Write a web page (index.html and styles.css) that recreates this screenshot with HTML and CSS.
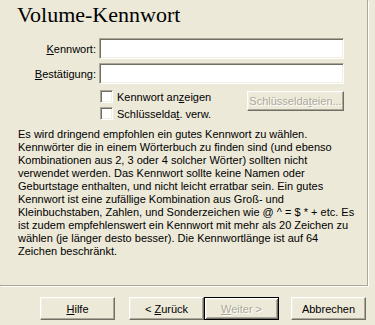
FILE: index.html
```html
<!DOCTYPE html>
<html lang="de">
<head>
<meta charset="utf-8">
<title>Volume-Kennwort</title>
<link rel="stylesheet" href="styles.css">
</head>
<body>
<div class="window">
  <div class="panel">
    <h1 class="title">Volume-Kennwort</h1>
    <div class="form">
      <label class="label"><u>K</u>ennwort:</label>
      <div class="field"></div>
      <label class="label"><u>B</u>estätigung:</label>
      <div class="field"></div>
      <div class="options">
        <div class="checks">
          <div class="check"><span class="box"></span><span>Kennwort an<u>z</u>eigen</span></div>
          <div class="check"><span class="box"></span><span>Schlüsselda<u>t</u>. verw.</span></div>
        </div>
        <div class="btn disabled small"><span>Schlüsselda<u>t</u>eien...</span></div>
      </div>
    </div>
    <p class="info">Es wird dringend empfohlen ein gutes Kennwort zu wählen.<br>Kennwörter die in einem Wörterbuch zu finden sind (und ebenso<br>Kombinationen aus 2, 3 oder 4 solcher Wörter) sollten nicht<br>verwendet werden. Das Kennwort sollte keine Namen oder<br>Geburtstage enthalten, und nicht leicht erratbar sein. Ein gutes<br>Kennwort ist eine zufällige Kombination aus Groß- und<br>Kleinbuchstaben, Zahlen, und Sonderzeichen wie @ ^ = $ * + etc. Es<br>ist zudem empfehlenswert ein Kennwort mit mehr als 20 Zeichen zu<br>wählen (je länger desto besser). Die Kennwortlänge ist auf 64<br>Zeichen beschränkt.</p>
  </div>
  <div class="footer">
    <div class="btn"><span><u>H</u>ilfe</span></div>
    <div class="nav">
      <div class="btn"><span>&lt; <u>Z</u>urück</span></div>
      <div class="btn default disabled"><span><u>W</u>eiter &gt;</span></div>
    </div>
    <div class="btn"><span>Abbrechen</span></div>
  </div>
</div>
</body>
</html>
```
FILE: styles.css
```css
html, body {
  margin: 0;
  padding: 0;
  background: #ECE9D8;
}
body {
  font-family: "Liberation Sans", Arial, sans-serif;
  font-size: 11px;
  color: #000;
}
.window {
  width: 375px;
  height: 325px;
  overflow: hidden;
}
.panel {
  box-sizing: border-box;
  width: 368px;
  height: 286px;
  border-right: 1px solid #ACA899;
  border-bottom: 1px solid #ACA899;
  box-shadow: 1px 1px 0 #fff;
  padding: 2px 0 0 17px;
}
.title {
  margin: 0;
  font-family: "Liberation Serif", "Times New Roman", serif;
  font-weight: normal;
  font-size: 22px;
  line-height: 25px;
  color: #000;
}
.form {
  display: grid;
  grid-template-columns: 79px 245px;
  column-gap: 3px;
  row-gap: 4px;
  margin-top: 11px;
  align-items: center;
}
.label {
  text-align: right;
  white-space: nowrap;
}
.field {
  box-sizing: border-box;
  height: 21px;
  background: #fff;
  border-style: solid;
  border-width: 1px;
  border-color: #ACA899 #fff #fff #ACA899;
  box-shadow: inset 1px 1px 0 #716F64, inset -1px -1px 0 #F1EFE2;
}
.options {
  grid-column: 2;
  display: flex;
  justify-content: space-between;
  align-items: flex-start;
}
.checks {
  display: flex;
  flex-direction: column;
}
.check {
  display: flex;
  align-items: center;
  gap: 4px;
  height: 17px;
  padding-left: 1px;
  white-space: nowrap;
}
.box {
  box-sizing: border-box;
  width: 13px;
  height: 13px;
  background: #fff;
  border-style: solid;
  border-width: 1px;
  border-color: #ACA899 #fff #fff #ACA899;
  box-shadow: inset 1px 1px 0 #716F64, inset -1px -1px 0 #F1EFE2;
}
.btn {
  box-sizing: border-box;
  width: 75px;
  height: 23px;
  display: flex;
  align-items: center;
  justify-content: center;
  background: #ECE9D8;
  border-style: solid;
  border-width: 1px;
  border-color: #fff #716F64 #716F64 #fff;
  box-shadow: inset -1px -1px 0 #ACA899, inset 1px 1px 0 #F1EFE2;
  white-space: nowrap;
}
.btn.small {
  width: 97px;
  height: 20px;
  margin-top: 3px;
}
.btn.disabled {
  color: #ACA899;
  text-shadow: 1px 1px 0 #fff;
}
.btn.default {
  border: 1px solid #000;
  box-shadow: inset 1px 1px 0 #fff, inset -1px -1px 0 #716F64, inset 2px 2px 0 #F1EFE2, inset -2px -2px 0 #ACA899;
}
.info {
  margin: 6px 0 0 1px;
  line-height: 13px;
  white-space: nowrap;
}
.footer {
  display: flex;
  align-items: flex-start;
  padding: 11px 0 0 40px;
}
.nav {
  display: flex;
  margin-left: 14px;
}
.footer > .btn:last-child {
  margin-left: 12px;
}
```
